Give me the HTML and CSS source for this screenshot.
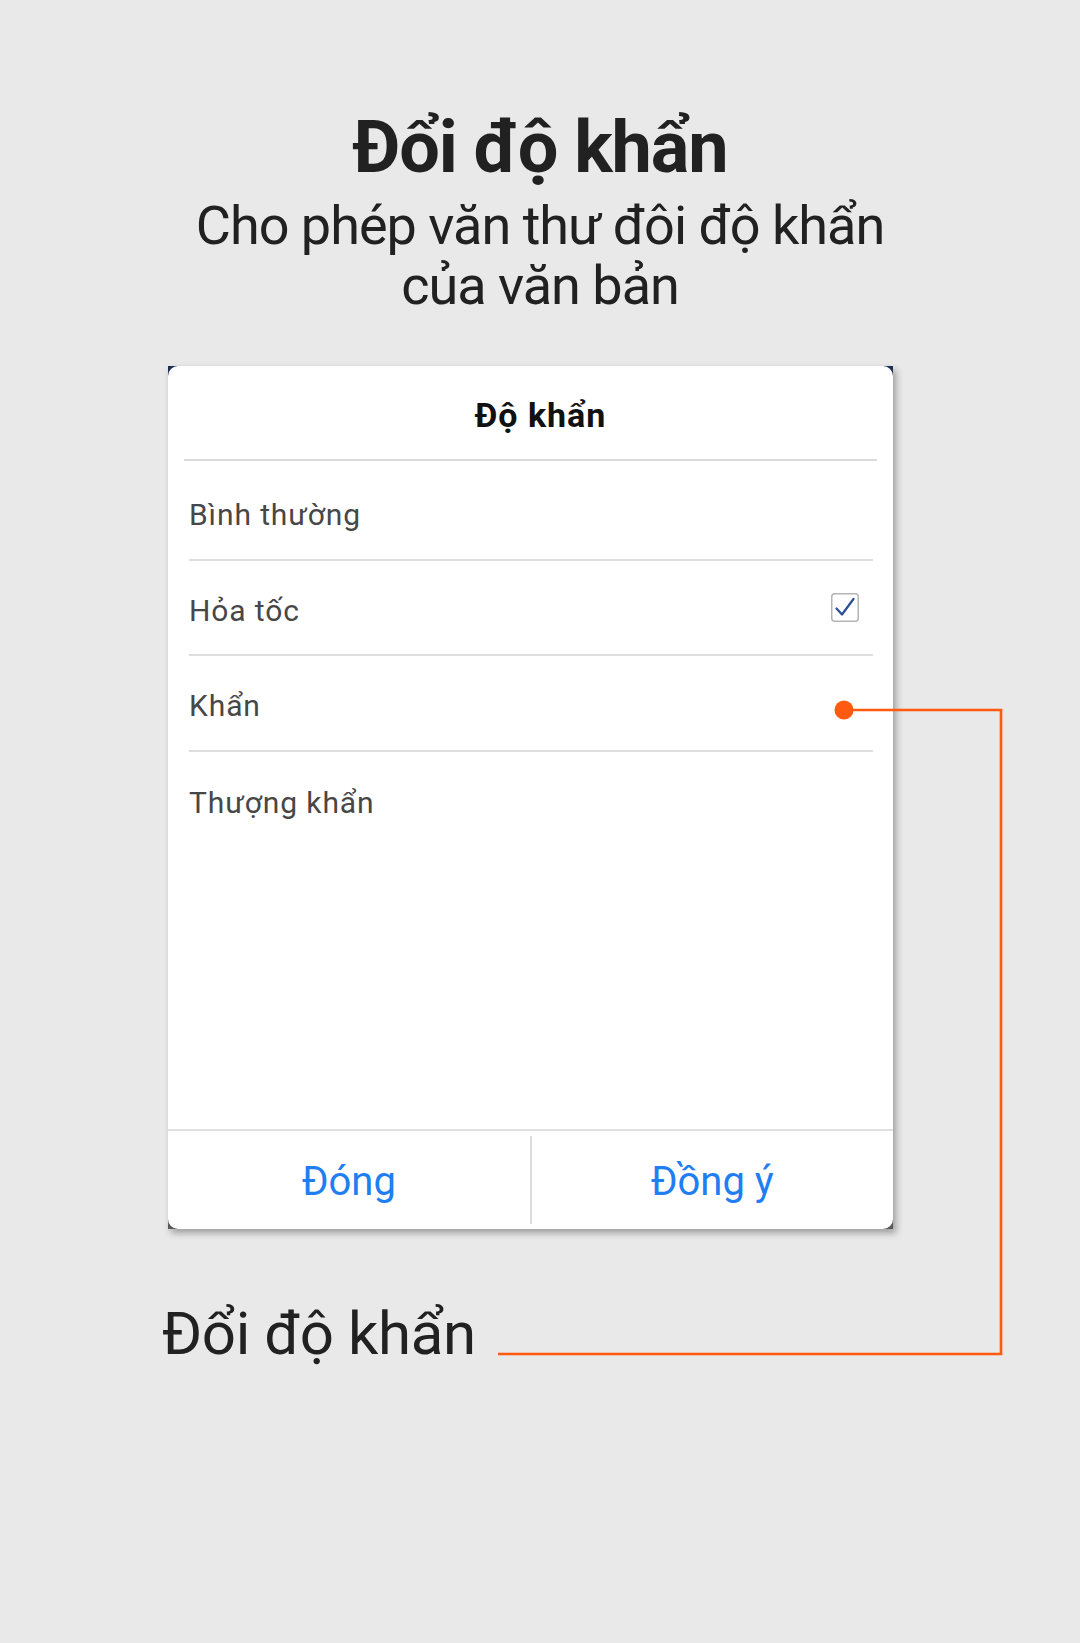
FILE: index.html
```html
<!DOCTYPE html>
<html lang="vi">
<head>
<meta charset="utf-8">
<title>Đổi độ khẩn</title>
<link rel="stylesheet" href="styles.css">
</head>
<body>
<div class="page">
  <header class="intro">
    <h1 class="intro-title">Đổi độ khẩn</h1>
    <p class="intro-sub">Cho phép văn thư đôi độ khẩn<br>của văn bản</p>
  </header>

  <div class="dialog-frame">
    <div class="dialog">
      <div class="dialog-head">
        <div class="dialog-title">Độ khẩn</div>
      </div>
      <ul class="options">
        <li class="option first"><span>Bình thường</span></li>
        <li class="option"><span>Hỏa tốc</span>
          <span class="check">
            <svg width="28" height="29" viewBox="0 0 28 29"><rect x="0.75" y="0.75" width="26.5" height="27.5" rx="3" fill="#fff" stroke="#b5b5b5" stroke-width="1.5"/><path d="M5.5 15.5 L11 21.5 L22.5 6" fill="none" stroke="#2b4f96" stroke-width="2.2" stroke-linecap="round" stroke-linejoin="round"/></svg>
          </span>
        </li>
        <li class="option"><span>Khẩn</span></li>
        <li class="option last"><span>Thượng khẩn</span></li>
      </ul>
      <div class="spacer"></div>
      <div class="dialog-foot">
        <div class="btn">Đóng</div>
        <div class="sep"></div>
        <div class="btn">Đồng ý</div>
      </div>
    </div>
  </div>

  <div class="caption">Đổi độ khẩn</div>

  <svg class="callout" width="1080" height="1643" viewBox="0 0 1080 1643">
    <polyline points="844,710 1001,710 1001,1354 498,1354" fill="none" stroke="#ff5a0f" stroke-width="2.6"/>
    <circle cx="844" cy="710" r="9.5" fill="#ff5a0f"/>
  </svg>
</div>
</body>
</html>
```
FILE: styles.css
```css
* { box-sizing: border-box; }
html, body { margin: 0; padding: 0; }
body {
  background: #e9e9e9;
  font-family: Roboto, "Noto Sans", "DejaVu Sans", sans-serif;
  color: #212121;
}
.page {
  position: relative;
  width: 1080px;
  height: 1643px;
  overflow: hidden;
  padding-top: 106px;
}
.intro { text-align: center; }
.intro-title {
  margin: 0;
  font-size: 72px;
  line-height: 84px;
  font-weight: 700;
  letter-spacing: -1.1px;
}
.intro-sub {
  margin: 6px 0 0;
  font-size: 54px;
  line-height: 60px;
  font-weight: 400;
  letter-spacing: -1px;
}
.dialog-frame {
  margin: 50px 0 0 168px;
  width: 725px;
  height: 863px;
  background: linear-gradient(#1c2f52 0 50%, #5a5a5a 50% 100%);
  box-shadow: 3px 4px 7px rgba(0,0,0,0.33);
}
.dialog {
  width: 100%;
  height: 100%;
  background: #fff;
  border-radius: 10px;
  display: flex;
  flex-direction: column;
}
.dialog-head {
  margin: 0 16px;
  padding: 29px 0 24px 20px;
  border-bottom: 2px solid #dcdcdc;
  text-align: center;
}
.dialog-title {
  font-size: 34px;
  line-height: 40px;
  font-weight: 700;
  letter-spacing: 1px;
  color: #111;
}
.options {
  list-style: none;
  margin: 0 20px 0 21px;
  padding: 4px 0 0;
}
.option {
  display: flex;
  align-items: center;
  justify-content: space-between;
  height: 95.5px;
  padding: 7px 0 0;
  border-bottom: 2px solid #dedede;
  font-size: 30px;
  line-height: 32px;
  letter-spacing: 0.9px;
  color: #474747;
}
.option.last { border-bottom: none; }
.check { display: flex; margin-right: 14px; margin-top: -7px; }
.spacer { flex: 1; }
.dialog-foot {
  display: flex;
  height: 100px;
  border-top: 2px solid #e0e0e0;
  padding: 5px 0;
}
.btn {
  flex: 1;
  display: flex;
  align-items: center;
  justify-content: center;
  padding-top: 4px;
  font-size: 40px;
  line-height: 48px;
  color: #1f7ff2;
}
.sep { width: 2px; background: #dcdcdc; }
.caption {
  margin: 70px 0 0 162px;
  font-size: 60px;
  line-height: 70px;
  letter-spacing: -0.4px;
  color: #212121;
}
.callout {
  position: absolute;
  left: 0;
  top: 0;
  pointer-events: none;
}
```
